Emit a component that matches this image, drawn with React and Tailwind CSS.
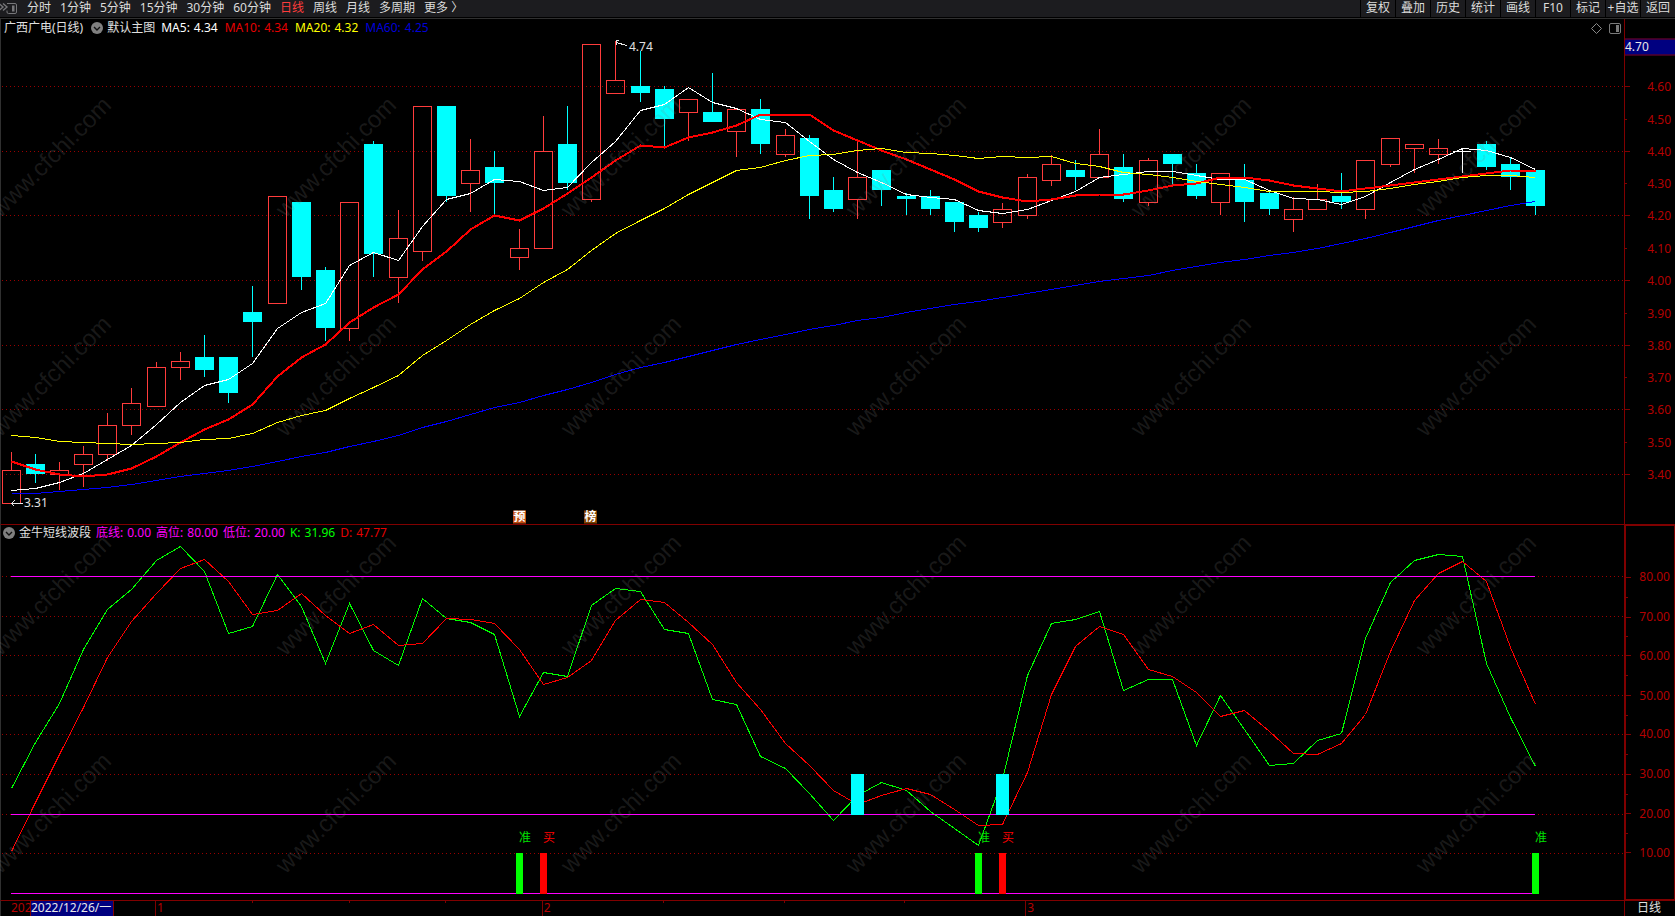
import React from "react";

const FIRST_X = 11;
const PITCH = 24.193;
const cx = (i) => Math.floor(FIRST_X + i * PITCH);

// [kind, high, body top, body bottom, low]; u = up (hollow), d = down (filled), n = flat
const CANDLES = [
  ["u", 452, 470, 503, 503], ["d", 454, 464, 474, 483], ["u", 462, 470, 474, 490], ["u", 446, 454, 464, 487],
  ["u", 413, 425, 454, 461], ["u", 388, 403, 425, 435], ["u", 362, 367, 406, 406], ["u", 352, 361, 367, 380],
  ["d", 335, 357, 370, 377], ["d", 357, 357, 393, 403], ["d", 286, 312, 322, 357], ["u", 196, 196, 303, 303],
  ["d", 202, 202, 277, 290], ["d", 267, 270, 328, 341], ["u", 202, 202, 328, 341], ["d", 141, 144, 254, 277],
  ["u", 210, 238, 277, 303], ["u", 106, 106, 251, 261], ["d", 106, 106, 196, 202], ["u", 139, 170, 183, 212],
  ["d", 151, 167, 183, 215], ["u", 229, 248, 257, 270], ["u", 116, 151, 248, 248], ["d", 106, 144, 183, 190],
  ["u", 44, 44, 199, 202], ["u", 41, 80, 93, 93], ["d", 51, 86, 93, 102], ["d", 86, 89, 119, 146],
  ["u", 99, 99, 112, 141], ["d", 73, 112, 122, 122], ["u", 109, 109, 131, 157], ["d", 99, 109, 144, 154],
  ["u", 129, 135, 154, 157], ["d", 135, 138, 196, 219], ["d", 177, 190, 209, 212], ["u", 142, 177, 199, 219],
  ["d", 170, 170, 190, 206], ["d", 193, 196, 199, 215], ["d", 190, 196, 209, 215], ["d", 202, 202, 222, 232],
  ["d", 212, 215, 228, 232], ["u", 203, 209, 222, 228], ["u", 174, 177, 215, 219], ["u", 155, 164, 180, 186],
  ["d", 160, 170, 177, 190], ["u", 129, 154, 177, 177], ["d", 154, 167, 199, 202], ["u", 158, 160, 202, 206],
  ["d", 154, 154, 164, 184], ["d", 164, 173, 196, 199], ["u", 173, 173, 202, 215], ["d", 164, 180, 202, 222],
  ["d", 190, 193, 209, 215], ["u", 197, 209, 219, 232], ["u", 184, 199, 209, 209], ["d", 173, 196, 202, 209],
  ["u", 160, 160, 209, 219], ["u", 138, 138, 164, 167], ["u", 144, 144, 148, 173], ["u", 139, 148, 154, 164],
  ["n", 149, 151, 151, 173], ["d", 141, 144, 167, 170], ["d", 157, 164, 177, 190], ["d", 170, 170, 206, 215],
];

const MA5 = [490, 488, 482, 473, 459, 445, 424, 402, 385, 379, 363, 328, 312, 303, 265, 252, 260, 226, 199, 193, 179, 181, 190, 187, 162, 141, 110, 104, 87, 102, 108, 119, 122, 141, 159, 172, 182, 194, 197, 199, 210, 213, 209, 200, 191, 177, 174, 171, 171, 175, 179, 179, 190, 198, 199, 204, 196, 182, 169, 159, 148, 150, 157, 169];
const MA10 = [461, 469, 474, 476, 474, 468, 456, 442, 429, 419, 404, 376, 357, 344, 322, 307, 294, 269, 251, 229, 215, 220, 208, 193, 177, 160, 145, 147, 137, 132, 125, 114, 114, 114, 130, 140, 150, 159, 169, 179, 191, 197, 201, 199, 195, 194, 194, 190, 185, 183, 177, 177, 180, 185, 188, 191, 188, 185, 182, 179, 176, 173, 170, 170];
const MA20 = [435, 437, 441, 442, 443, 444, 443, 442, 439, 438, 433, 422, 415, 410, 398, 387, 375, 355, 340, 324, 310, 298, 282, 269, 250, 233, 220, 208, 194, 182, 170, 167, 160, 155, 154, 150, 148, 152, 153, 155, 158, 156, 157, 156, 163, 166, 172, 174, 177, 181, 184, 187, 191, 191, 191, 192, 191, 188, 184, 181, 177, 175, 175, 177];
const MA60 = [493, 493, 491, 489, 487, 484, 480, 476, 473, 470, 466, 461, 456, 452, 446, 441, 435, 427, 421, 414, 407, 402, 395, 389, 382, 374, 367, 362, 356, 350, 344, 339, 334, 329, 325, 320, 317, 312, 308, 304, 301, 297, 293, 289, 285, 281, 278, 275, 270, 266, 262, 259, 255, 252, 248, 243, 238, 232, 226, 220, 215, 210, 205, 201];
const K_LINE = [788, 742, 703, 649, 609, 589, 560, 546, 571, 633, 626, 574, 606, 663, 603, 650, 665, 598, 618, 622, 634, 716, 672, 676, 605, 588, 591, 629, 633, 699, 704, 756, 768, 793, 820, 795, 782, 790, 811, 828, 845, 779, 675, 623, 619, 611, 690, 679, 679, 745, 695, 729, 765, 763, 740, 733, 638, 582, 560, 554, 556, 663, 717, 766];
const D_LINE = [851, 802, 754, 707, 657, 621, 593, 568, 559, 581, 614, 610, 593, 615, 633, 624, 645, 643, 618, 619, 623, 649, 684, 677, 660, 620, 599, 602, 622, 644, 682, 709, 743, 765, 790, 804, 795, 788, 794, 809, 825, 824, 772, 694, 646, 626, 634, 669, 676, 692, 716, 710, 731, 753, 754, 743, 714, 651, 600, 573, 561, 581, 647, 704];

const MAIN = { x: 1, y: 19, w: 1623, h: 505 };
const SUB = { x: 1, y: 525, w: 1623, h: 375 };

const pctX = (box, x) => `${((x - box.x) / box.w) * 100}%`;
const pctY = (box, y) => `${((y - box.y) / box.h) * 100}%`;

const MAIN_TICKS = [
  [86, "4.60"], [119, "4.50"], [151, "4.40"], [183, "4.30"], [215, "4.20"], [248, "4.10"], [280, "4.00"],
  [313, "3.90"], [345, "3.80"], [377, "3.70"], [409, "3.60"], [442, "3.50"], [474, "3.40"],
];
const SUB_TICKS = [
  [576, "80.00"], [616, "70.00"], [655, "60.00"], [695, "50.00"], [734, "40.00"], [774, "30.00"], [814, "20.00"], [853, "10.00"],
];
const SUB_MINOR = [596, 636, 675, 715, 754, 794, 834];

const PERIODS = ["分时", "1分钟", "5分钟", "15分钟", "30分钟", "60分钟", "日线", "周线", "月线", "多周期", "更多 〉"];
const TOOLS = ["复权", "叠加", "历史", "统计", "画线", "F10", "标记", "+自选", "返回"];

function Series({ data, color, width = 1 }) {
  return (
    <polyline
      points={data.map((y, i) => `${cx(i) + 0.5},${y + 0.5}`).join(" ")}
      fill="none"
      stroke={color}
      strokeWidth={width}
      vectorEffect="non-scaling-stroke"
    />
  );
}

function GridLine({ y }) {
  return (
    <line x1="2" x2="1624" y1={y + 0.5} y2={y + 0.5} stroke="#9a0000" strokeDasharray="1 3" vectorEffect="non-scaling-stroke" />
  );
}

function Plot({ box, label, children }) {
  return (
    <svg
      className="absolute inset-0 size-full"
      viewBox={`${box.x} ${box.y} ${box.w} ${box.h}`}
      preserveAspectRatio="none"
      shapeRendering="crispEdges"
      role="img"
      aria-label={label}
    >
      {children}
    </svg>
  );
}

function Candle({ i, c: [kind, high, top, bottom, low] }) {
  const x = cx(i);
  if (kind === "d") {
    return (
      <g fill="#00ffff">
        <rect x={x} y={high} width="1" height={low - high} />
        <rect x={x - 9} y={top} width="19" height={bottom - top} />
      </g>
    );
  }
  if (kind === "n") {
    return (
      <g fill="#ffffff">
        <rect x={x} y={high} width="1" height={low - high} />
        <rect x={x - 9} y={top} width="18" height="1" />
      </g>
    );
  }
  return (
    <g fill="#ff3c3c">
      <rect x={x} y={high} width="1" height={top - high} />
      <rect x={x} y={bottom} width="1" height={low - bottom} />
      <rect x={x - 9 + 0.5} y={top + 0.5} width="18" height={bottom - top} fill="none" stroke="#ff3c3c" vectorEffect="non-scaling-stroke" />
    </g>
  );
}

function Note({ box, x, y, className, children }) {
  return (
    <span
      className={`absolute -translate-y-1/2 leading-none whitespace-nowrap ${className}`}
      style={{ left: pctX(box, x), top: pctY(box, y) }}
    >
      {children}
    </span>
  );
}

function Tick({ box, y, text, long }) {
  return (
    <div className="absolute inset-x-0 flex h-3 -translate-y-1/2 items-center justify-between pr-1" style={{ top: pctY(box, y + 0.5) }}>
      <span className={long ? "h-px w-[5px] bg-[#800000]" : "h-px w-0.5 bg-[#800000]"} />
      <span className="leading-none text-[#b40000]">{text}</span>
    </div>
  );
}

function Reading({ name, value, className }) {
  return (
    <span className={`flex gap-1 ${className}`}>
      <span>{name}:</span>
      <span>{value}</span>
    </span>
  );
}

function Collapse({ label }) {
  return (
    <button type="button" aria-label={label} className="shrink-0">
      <svg viewBox="0 0 12 12" className="size-3" fill="none">
        <circle cx="6" cy="6" r="6" fill="#808080" />
        <path d="M3 5l3 3 3-3" stroke="#111" strokeWidth="1.4" />
      </svg>
    </button>
  );
}

function Watermarks() {
  const xs = [51, 336, 621, 906, 1191, 1476];
  const ys = [157, 376, 595, 813];
  return (
    <div className="pointer-events-none absolute inset-0 overflow-hidden font-['Liberation_Sans',sans-serif] text-[24px] leading-none text-[#808080]/20" aria-hidden="true">
      {ys.map((y) =>
        xs.map((x) => (
          <span
            key={`${x}-${y}`}
            className="absolute -translate-x-1/2 -translate-y-1/2 -rotate-45"
            style={{ left: `${(x / 1675) * 100}%`, top: `${(y / 916) * 100}%` }}
          >
            www.cfchi.com
          </span>
        ))
      )}
    </div>
  );
}

function Toolbar() {
  return (
    <header className="flex h-[18px] items-stretch justify-between border-b border-black bg-[#1c1c1f] text-[#dcdcdc]">
      <nav className="flex items-center gap-[9px] pb-0.5" aria-label="周期">
        <button type="button" aria-label="展开侧栏">
          <svg viewBox="0 0 18 14" className="h-3.5 w-[18px]" fill="none" stroke="#77777a">
            <path d="M-1 2.500L3 6L-1 9.500M3 2.500L7 6L3 9.500" strokeWidth="1.400" />
            <path d="M7 2.500H15Q16.500 2.500 16.500 4V11Q16.500 12.500 15 12.500H8.500Q7 12.500 7 11V9.500" />
            <rect x="12" y="4.500" width="2.500" height="6" fill="#77777a" stroke="none" />
          </svg>
        </button>
        {PERIODS.map((p) => (
          <button key={p} type="button" className={p === "日线" ? "leading-none text-[#ff3c3c]" : "leading-none"}>
            {p}
          </button>
        ))}
      </nav>
      <div className="flex">
        {TOOLS.map((t) => (
          <button key={t} type="button" className="w-[35px] border-l border-black pb-0.5 text-center leading-none whitespace-nowrap">
            {t}
          </button>
        ))}
      </div>
    </header>
  );
}

function MainPanel() {
  return (
    <section className="flex flex-[505_1_0px] border-t border-l border-[#303030]">
      <div className="relative flex-1">
        <Plot box={MAIN} label="广西广电 日线">
          {[86, 151, 215, 280, 345, 409, 474].map((y) => <GridLine key={y} y={y} />)}
          {CANDLES.map((c, i) => <Candle key={i} i={i} c={c} />)}
          <Series data={MA5} color="#ffffff" />
          <Series data={MA10} color="#ff0000" width={2} />
          <Series data={MA20} color="#ffff00" />
          <Series data={MA60} color="#0000ff" />
          <g fill="none" stroke="#e8e8e8">
            <path d="M11 503.500H23M14.500 500.500L11.500 503.500L14.500 506.500" />
            <path d="M616 42.500L627 45.500M619 40.500H616.500V45" />
          </g>
        </Plot>
        <div className="relative flex h-[18px] items-center justify-between pr-[3px] pl-[3px]">
          <div className="flex items-center leading-none whitespace-nowrap">
            <span className="text-[#e0e0e0]">广西广电(日线)</span>
            <span className="flex items-center gap-1 pl-2">
              <Collapse label="主图指标" />
              <span className="text-[#e0e0e0]">默认主图</span>
            </span>
            <span className="flex gap-[7px] pl-1.5">
              <Reading name="MA5" value="4.34" className="text-white" />
              <Reading name="MA10" value="4.34" className="text-[#e60000]" />
              <Reading name="MA20" value="4.32" className="text-[#ffff00]" />
              <Reading name="MA60" value="4.25" className="text-[#0000d8]" />
            </span>
          </div>
          <div className="flex items-center gap-[7px]">
            <button type="button" aria-label="标记点">
              <svg viewBox="0 0 11 11" className="size-[11px]" fill="none" stroke="#8a8a8a">
                <path d="M5.500 0.500L10.500 5.500L5.500 10.500L0.500 5.500Z" />
              </svg>
            </button>
            <button type="button" aria-label="侧栏">
              <svg viewBox="0 0 12 11" className="h-[11px] w-3" fill="none" stroke="#7a7a7a">
                <rect x="0.500" y="0.500" width="11" height="10" rx="1.500" />
                <rect x="7" y="2" width="3" height="7" fill="#7a7a7a" stroke="none" />
              </svg>
            </button>
          </div>
        </div>
        <Note box={MAIN} x={24} y={503} className="text-[#e0e0e0]">3.31</Note>
        <Note box={MAIN} x={629} y={47} className="text-[#e0e0e0]">4.74</Note>
        <Note box={MAIN} x={513} y={516.5} className="h-[13px] w-[13px] bg-[#c04a10] text-center font-bold text-white">预</Note>
        <Note box={MAIN} x={584} y={516.5} className="h-[13px] w-[13px] bg-[#804000] text-center font-bold text-white">榜</Note>
      </div>
      <div className="relative w-[51px] border-l border-[#800000]">
        {MAIN_TICKS.map(([y, t], i) => <Tick key={t} box={MAIN} y={y} text={t} long={i % 2 === 0} />)}
        <div
          className="absolute inset-x-0 flex h-[17px] -translate-y-1/2 items-center border-y border-[#800000] bg-[#000080] leading-none text-[#e8e8e8]"
          style={{ top: pctY(MAIN, 46.5) }}
        >
          4.70
        </div>
      </div>
    </section>
  );
}

function SubPanel() {
  return (
    <section className="flex flex-[375_1_0px] border-y border-l border-y-[#800000] border-l-[#303030]">
      <div className="relative flex-1">
        <Plot box={SUB} label="金牛短线波段">
          {SUB_TICKS.map(([y]) => <GridLine key={y} y={y} />)}
          <Series data={K_LINE} color="#00ff00" />
          <Series data={D_LINE} color="#ff0000" />
          <g fill="#ff00ff">
            {[576, 814, 893].map((y) => <rect key={y} x="11" y={y} width="1524" height="1" />)}
          </g>
          <g fill="#00ffff">
            {[35, 41].map((i) => <rect key={i} x={cx(i) - 6} y="774" width="13" height="41" />)}
          </g>
          <g fill="#00ff00">
            {[21, 40, 63].map((i) => <rect key={i} x={cx(i) - 3} y="853" width="7" height="41" />)}
          </g>
          <g fill="#ff0000">
            {[22, 41].map((i) => <rect key={i} x={cx(i) - 3} y="853" width="7" height="41" />)}
          </g>
        </Plot>
        <div className="relative flex h-4 items-center gap-1 pl-0.5 leading-none whitespace-nowrap">
          <Collapse label="副图指标" />
          <span className="flex gap-[5px]">
            <span className="text-[#e0e0e0]">金牛短线波段</span>
            <Reading name="底线" value="0.00" className="text-[#ff00ff]" />
            <Reading name="高位" value="80.00" className="text-[#ff00ff]" />
            <Reading name="低位" value="20.00" className="text-[#ff00ff]" />
            <Reading name="K" value="31.96" className="text-[#00ff00]" />
            <Reading name="D" value="47.77" className="text-[#e60000]" />
          </span>
        </div>
        {[21, 40, 63].map((i) => (
          <Note key={i} box={SUB} x={cx(i)} y={838} className="text-[#00e000]">准</Note>
        ))}
        {[22, 41].map((i) => (
          <Note key={i} box={SUB} x={cx(i)} y={838} className="text-[#ff0000]">买</Note>
        ))}
      </div>
      <div className="flex w-[51px] border-y border-r border-l-2 border-[#800000]">
        <div className="relative flex-1">
          {SUB_TICKS.map(([y, t]) => <Tick key={t} box={SUB} y={y} text={t} long />)}
          {SUB_MINOR.map((y) => <Tick key={y} box={SUB} y={y} text="" />)}
        </div>
      </div>
    </section>
  );
}

function DateAxis() {
  const box = { x: 0, w: 1624 };
  return (
    <footer className="flex h-[15px] text-[#b40000]">
      <div className="relative flex-1 overflow-hidden border-l border-[#303030]">
        <span className="absolute top-px left-[10px] leading-none">202</span>
        <span className="absolute inset-y-0 left-[29px] flex items-center border-x border-[#800000] bg-[#000080] pr-0.5 pb-0.5 leading-none whitespace-nowrap text-[#e8e8e8]">
          2022/12/26/一
        </span>
        {[252, 349, 445, 663, 784, 905].map((x) => (
          <span key={x} className="absolute top-0 h-0.5 w-px bg-[#800000]" style={{ left: pctX(box, x - 1) }} />
        ))}
        {[[155, "1"], [542, "2"], [1026, "3"]].map(([x, t]) => (
          <span key={t} className="absolute inset-y-0 flex items-center border-l border-[#800000] pb-0.5 pl-px leading-none" style={{ left: pctX(box, x - 1) }}>
            {t}
          </span>
        ))}
      </div>
      <div className="flex w-[51px] items-center border-l border-[#800000] pb-0.5 pl-3 leading-none text-[#e0e0e0]">日线</div>
    </footer>
  );
}

export default function App() {
  return (
    <div className="relative flex min-h-screen flex-col bg-black font-['Noto_Sans','Noto_Sans_CJK_SC',sans-serif] text-[12px]">
      <Toolbar />
      <MainPanel />
      <SubPanel />
      <DateAxis />
      <Watermarks />
    </div>
  );
}
